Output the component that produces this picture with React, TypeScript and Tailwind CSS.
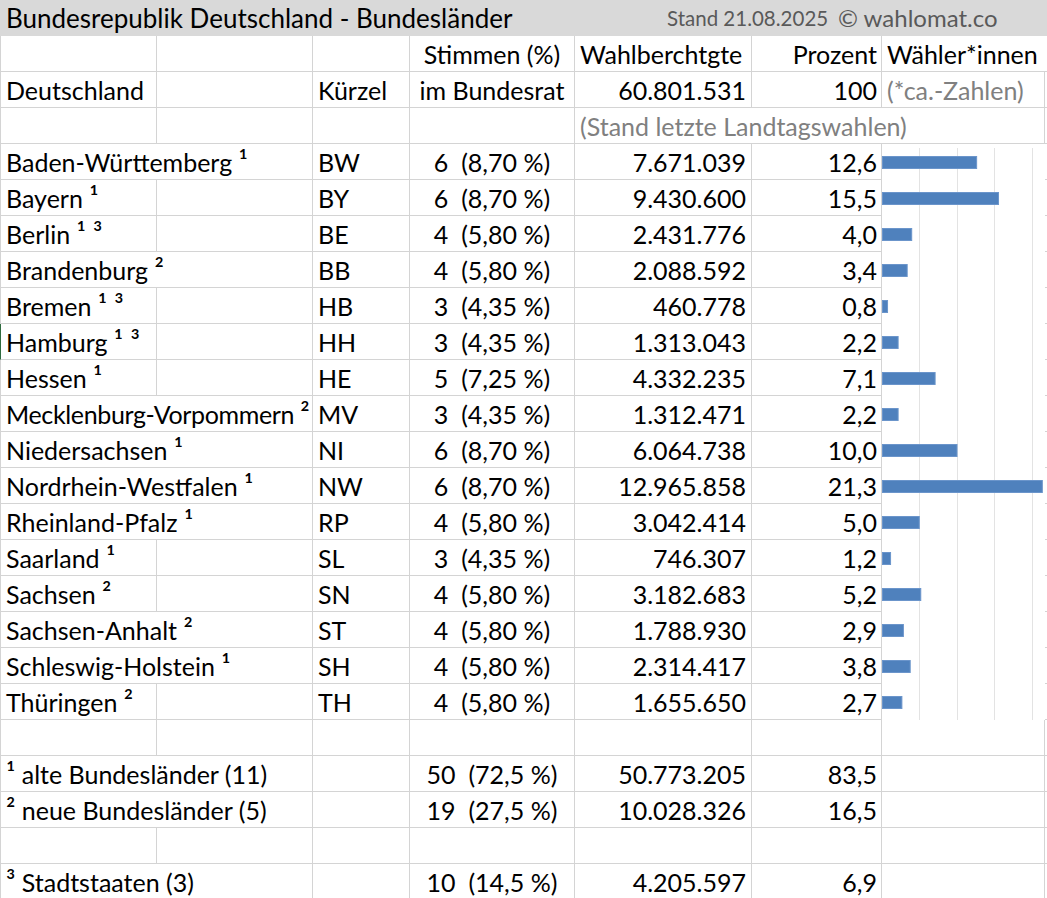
import React from "react";

type Row = { name: string; sup: string; code: string; seats: string; pct: string; voters: string; share: string; v: number; span: boolean };

const rows: Row[] = [
  { name: "Baden-Württemberg", sup: "¹", code: "BW", seats: "6", pct: "8,70 %", voters: "7.671.039", share: "12,6", v: 12.6, span: true },
  { name: "Bayern", sup: "¹", code: "BY", seats: "6", pct: "8,70 %", voters: "9.430.600", share: "15,5", v: 15.5, span: false },
  { name: "Berlin", sup: "¹ ³", code: "BE", seats: "4", pct: "5,80 %", voters: "2.431.776", share: "4,0", v: 4.0, span: false },
  { name: "Brandenburg", sup: "²", code: "BB", seats: "4", pct: "5,80 %", voters: "2.088.592", share: "3,4", v: 3.4, span: true },
  { name: "Bremen", sup: "¹ ³", code: "HB", seats: "3", pct: "4,35 %", voters: "460.778", share: "0,8", v: 0.8, span: false },
  { name: "Hamburg", sup: "¹ ³", code: "HH", seats: "3", pct: "4,35 %", voters: "1.313.043", share: "2,2", v: 2.2, span: false },
  { name: "Hessen", sup: "¹", code: "HE", seats: "5", pct: "7,25 %", voters: "4.332.235", share: "7,1", v: 7.1, span: false },
  { name: "Mecklenburg-Vorpommern", sup: "²", code: "MV", seats: "3", pct: "4,35 %", voters: "1.312.471", share: "2,2", v: 2.2, span: true },
  { name: "Niedersachsen", sup: "¹", code: "NI", seats: "6", pct: "8,70 %", voters: "6.064.738", share: "10,0", v: 10.0, span: true },
  { name: "Nordrhein-Westfalen", sup: "¹", code: "NW", seats: "6", pct: "8,70 %", voters: "12.965.858", share: "21,3", v: 21.3, span: true },
  { name: "Rheinland-Pfalz", sup: "¹", code: "RP", seats: "4", pct: "5,80 %", voters: "3.042.414", share: "5,0", v: 5.0, span: true },
  { name: "Saarland", sup: "¹", code: "SL", seats: "3", pct: "4,35 %", voters: "746.307", share: "1,2", v: 1.2, span: false },
  { name: "Sachsen", sup: "²", code: "SN", seats: "4", pct: "5,80 %", voters: "3.182.683", share: "5,2", v: 5.2, span: false },
  { name: "Sachsen-Anhalt", sup: "²", code: "ST", seats: "4", pct: "5,80 %", voters: "1.788.930", share: "2,9", v: 2.9, span: true },
  { name: "Schleswig-Holstein", sup: "¹", code: "SH", seats: "4", pct: "5,80 %", voters: "2.314.417", share: "3,8", v: 3.8, span: true },
  { name: "Thüringen", sup: "²", code: "TH", seats: "4", pct: "5,80 %", voters: "1.655.650", share: "2,7", v: 2.7, span: false },
];

const B = "border-b border-[#d4d4d4]";
const BR = "border-r border-[#d4d4d4]";
const cellBase = "h-[36px] leading-[36px] whitespace-nowrap overflow-visible relative";

function Sup({ children }: { children: React.ReactNode }) {
  return <span className="text-[28px] leading-none whitespace-pre">{children}</span>;
}

function Seats({ s, p }: { s: string; p: string }) {
  return (
    <div className={`${cellBase} ${B} ${BR} text-center`}>
      <span className="whitespace-pre">{s}{"  "}({p})</span>
    </div>
  );
}

function Chart() {
  const scale = 7.55;
  return (
    <div className="col-start-7 row-start-4 row-span-16 bg-white">
      <svg width="163" height="576" viewBox="0 0 163 576">
        {[5, 10, 15, 20].map((g) => (
          <line key={g} x1={Math.round(g * scale) - 0.5} x2={Math.round(g * scale) - 0.5} y1={4} y2={576} stroke="#e3e3e3" strokeWidth="1" />
        ))}
        {rows.map((r, i) => (
          <rect key={r.code} x={0.5} y={i * 36 + 12.5} width={Math.max(r.v * scale - 1, 3)} height={12} fill="#4f81bd" stroke="#6b95cb" strokeWidth="1" />
        ))}
      </svg>
    </div>
  );
}

function Empty({ last }: { last?: boolean }) {
  return <div className={`${cellBase} ${B} ${last ? "" : BR}`} />;
}

export default function App() {
  return (
    <div
      className="w-[1047px] h-[898px] overflow-hidden bg-white text-black text-[25px]"
      style={{ fontFamily: '"Lato", "Noto Sans", sans-serif' }}
    >
      <div className="h-[36px] bg-[#d9d9d9] flex items-center leading-[36px] whitespace-nowrap">
        <div className="w-[667px] shrink-0 pl-[6px] text-[26px]">Bundesrepublik Deutschland - Bundesländer</div>
        <div className="w-[171px] shrink-0 text-[#595959] text-[20.5px]">Stand 21.08.2025</div>
        <div className="shrink-0 text-[#595959] text-[24px]">© wahlomat.co</div>
      </div>
      <div className="grid grid-cols-[157px_156px_97px_165px_177px_130px_163px_2px] auto-rows-[36px]">
        <Chart />
        {/* header row 1 */}
        <div className={`${cellBase} ${B} ${BR} border-l`} />
        <Empty />
        <Empty />
        <div className={`${cellBase} ${B} ${BR} text-center`}>Stimmen (%)</div>
        <div className={`${cellBase} ${B} ${BR} pl-[5px]`}>Wahlberchtgte</div>
        <div className={`${cellBase} ${B} ${BR} text-right pr-[4px]`}>Prozent</div>
        <div className={`${cellBase} ${B} pl-[5px] z-10`}>Wähler*innen</div>
        <Empty last />
        {/* header row 2 */}
        <div className={`${cellBase} ${B} ${BR} border-l pl-[5px]`}>Deutschland</div>
        <Empty />
        <div className={`${cellBase} ${B} ${BR} pl-[5px]`}>Kürzel</div>
        <div className={`${cellBase} ${B} ${BR} text-center`}>im Bundesrat</div>
        <div className={`${cellBase} ${B} ${BR} text-right pr-[5px]`}>60.801.531</div>
        <div className={`${cellBase} ${B} ${BR} text-right pr-[4px]`}>100</div>
        <div className={`${cellBase} ${B} ${BR} pl-[5px] text-[#808080]`}>(*ca.-Zahlen)</div>
        <Empty last />
        {/* header row 3 */}
        <div className={`${cellBase} ${B} ${BR} border-l`} />
        <Empty />
        <Empty />
        <Empty />
        <div className={`${cellBase} ${B} ${BR} col-span-3 pl-[5px] text-[#808080]`}>(Stand letzte Landtagswahlen)</div>
        <Empty last />
        {/* data rows */}
        {rows.map((r) => (
          <React.Fragment key={r.code}>
            {r.span ? (
              <div className={`${cellBase} ${B} ${BR} border-l pl-[5px] col-span-2 ${r.code === "MV" ? "tracking-[-0.35px]" : ""}`}>
                {r.name} <Sup>{r.sup}</Sup>
              </div>
            ) : (
              <>
                <div className={`${cellBase} ${B} ${BR} pl-[5px] border-l ${r.code === "HH" ? "border-l-[#2f6b3f]" : ""}`}>
                  {r.name} <Sup>{r.sup}</Sup>
                </div>
                <Empty />
              </>
            )}
            <div className={`${cellBase} ${B} ${BR} pl-[5px]`}>{r.code}</div>
            <Seats s={r.seats} p={r.pct} />
            <div className={`${cellBase} ${B} ${BR} text-right pr-[5px]`}>{r.voters}</div>
            <div className={`${cellBase} ${B} ${BR} text-right pr-[4px]`}>{r.share}</div>
            <div className={`${cellBase} ${B} col-start-8`} />
          </React.Fragment>
        ))}
        {/* empty row */}
        <div className={`${cellBase} ${B} ${BR} border-l`} />
        <Empty />
        <Empty />
        <Empty />
        <Empty />
        <Empty />
        <Empty />
        <Empty last />
        {/* alte */}
        <div className={`${cellBase} ${B} ${BR} border-l pl-[5px] col-span-2`}><Sup>¹</Sup> alte Bundesländer (11)</div>
        <Empty />
        <Seats s="50" p="72,5 %" />
        <div className={`${cellBase} ${B} ${BR} text-right pr-[5px]`}>50.773.205</div>
        <div className={`${cellBase} ${B} ${BR} text-right pr-[4px]`}>83,5</div>
        <Empty />
        <Empty last />
        {/* neue */}
        <div className={`${cellBase} ${B} ${BR} border-l pl-[5px] col-span-2`}><Sup>²</Sup> neue Bundesländer (5)</div>
        <Empty />
        <Seats s="19" p="27,5 %" />
        <div className={`${cellBase} ${B} ${BR} text-right pr-[5px]`}>10.028.326</div>
        <div className={`${cellBase} ${B} ${BR} text-right pr-[4px]`}>16,5</div>
        <Empty />
        <Empty last />
        {/* empty row */}
        <div className={`${cellBase} ${B} ${BR} border-l`} />
        <Empty />
        <Empty />
        <Empty />
        <Empty />
        <Empty />
        <Empty />
        <Empty last />
        {/* Stadtstaaten */}
        <div className={`${cellBase} ${B} ${BR} border-l pl-[5px] col-span-2`}><Sup>³</Sup> Stadtstaaten (3)</div>
        <Empty />
        <Seats s="10" p="14,5 %" />
        <div className={`${cellBase} ${B} ${BR} text-right pr-[5px]`}>4.205.597</div>
        <div className={`${cellBase} ${B} ${BR} text-right pr-[4px]`}>6,9</div>
        <Empty />
        <Empty last />
      </div>
    </div>
  );
}
